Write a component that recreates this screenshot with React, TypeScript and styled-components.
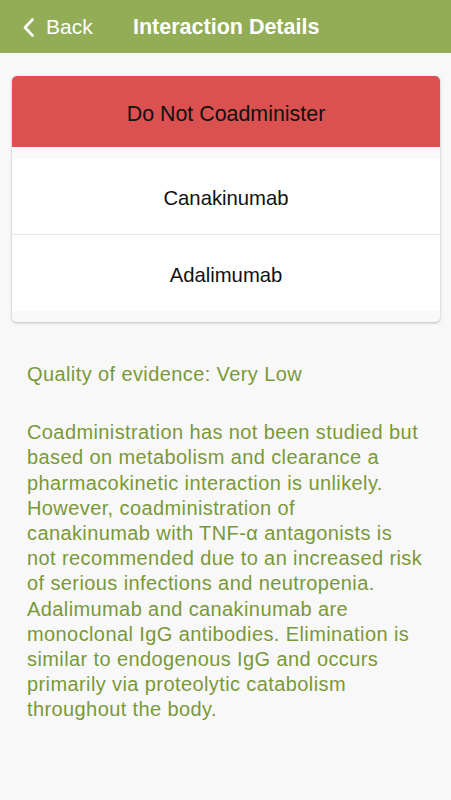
import React from 'react'
import styled, { createGlobalStyle } from 'styled-components'

const GlobalStyle = createGlobalStyle`
  html, body {
    margin: 0;
    padding: 0;
    background: #f8f8f8;
    font-family: "Liberation Sans", Arial, sans-serif;
  }
`
const Page = styled.div`
  width: 451px;
  min-height: 800px;
  background: #f8f8f8;
`
const Header = styled.div`
  height: 53px;
  background: #93ad57;
  display: flex;
  align-items: center;
  color: #ffffff;
  padding-top: 1px;
  box-sizing: border-box;
`
const BackButton = styled.div`
  display: flex;
  align-items: center;
  gap: 12px;
  padding-left: 23px;
  font-size: 21px;
  width: 110px;
`
const Title = styled.div`
  font-size: 21.5px;
  font-weight: 700;
`
const Card = styled.div`
  margin: 23px 11px 0 12px;
  border-radius: 5px;
  overflow: hidden;
  background: #f9f9f9;
  box-shadow: 0 1px 3px rgba(0, 0, 0, 0.25);
`
const Severity = styled.div`
  height: 71px;
  box-sizing: border-box;
  padding-top: 5px;
  background: #db5150;
  display: flex;
  align-items: center;
  justify-content: center;
  font-size: 21.4px;
  color: #111111;
`
const DrugList = styled.div`
  padding: 12px 0 11px;
`
const DrugRow = styled.div<{ $last?: boolean }>`
  height: 76px;
  box-sizing: border-box;
  padding-top: 4px;
  background: #ffffff;
  display: flex;
  align-items: center;
  justify-content: center;
  font-size: 20.3px;
  color: #111111;
  border-bottom: ${p => (p.$last ? 'none' : '1px solid #e6e6e6')};
`
const Body = styled.div`
  padding: 40px 10px 0 27px;
  color: #7a9838;
  font-size: 20px;
  letter-spacing: 0.4px;
  line-height: 25.2px;
`
const Quality = styled.p`
  margin: 0 0 33px;
`
const Description = styled.p`
  margin: 0;
  white-space: nowrap;
`

const lines = [
  'Coadministration has not been studied but',
  'based on metabolism and clearance a',
  'pharmacokinetic interaction is unlikely.',
  'However, coadministration of',
  'canakinumab with TNF-α antagonists is',
  'not recommended due to an increased risk',
  'of serious infections and neutropenia.',
  'Adalimumab and canakinumab are',
  'monoclonal IgG antibodies. Elimination is',
  'similar to endogenous IgG and occurs',
  'primarily via proteolytic catabolism',
  'throughout the body.',
]

export default function App() {
  return (
    <Page>
      <GlobalStyle />
      <Header>
        <BackButton>
          <svg width="11" height="19" viewBox="0 0 11 19">
            <path d="M9.5 1.5 L2 9.5 L9.5 17.5" fill="none" stroke="#ffffff" strokeWidth="2.6" strokeLinecap="round" strokeLinejoin="round" />
          </svg>
          Back
        </BackButton>
        <Title>Interaction Details</Title>
      </Header>
      <Card>
        <Severity>Do Not Coadminister</Severity>
        <DrugList>
          <DrugRow>Canakinumab</DrugRow>
          <DrugRow $last>Adalimumab</DrugRow>
        </DrugList>
      </Card>
      <Body>
        <Quality>Quality of evidence: Very Low</Quality>
        <Description>
          {lines.map((l, i) => (
            <React.Fragment key={i}>
              {l}
              {i < lines.length - 1 && <br />}
            </React.Fragment>
          ))}
        </Description>
      </Body>
    </Page>
  )
}
